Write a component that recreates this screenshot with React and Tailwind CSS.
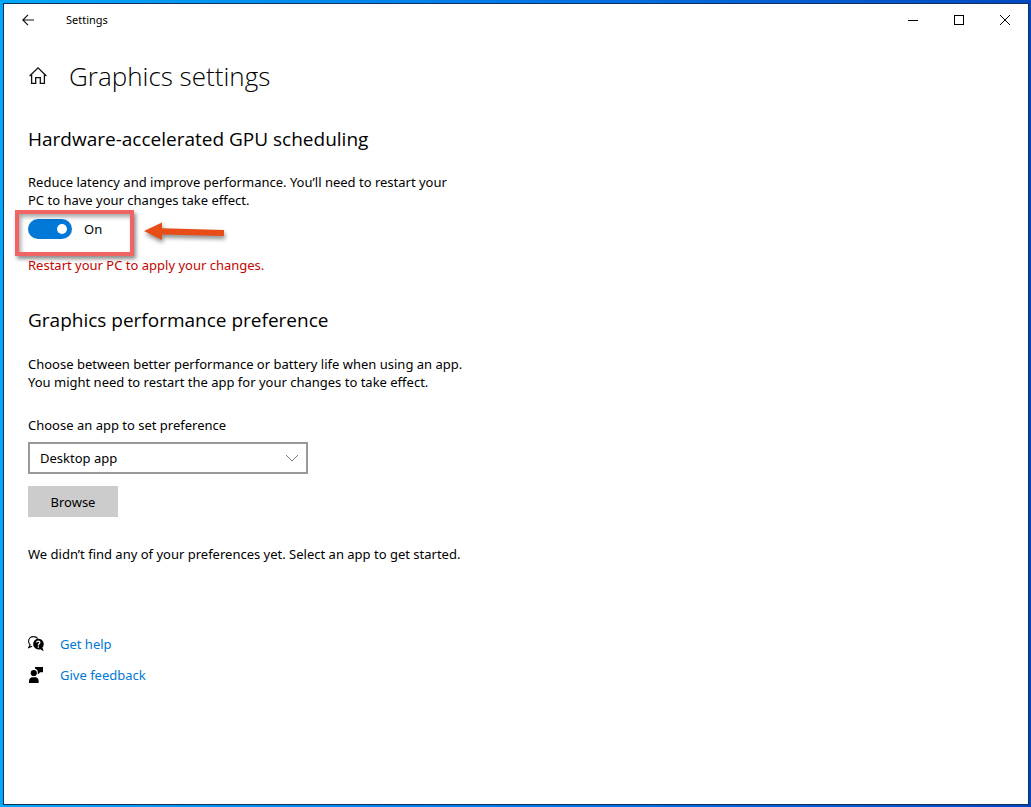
const BackIcon = () => (
    <svg width="12" height="12" viewBox="0 0 12 12" fill="none" stroke="#111" strokeWidth="1.2">
        <path d="M12 6H0.8M6 0.8L0.8 6L6 11.2" />
    </svg>
);

const HomeIcon = () => (
    <svg width="18" height="18" viewBox="0 0 18 18" fill="none" stroke="#111" strokeWidth="1.3">
        <path d="M0.6 9L9 0.9L17.4 9" />
        <path d="M2.6 7.4V16.4H6.7V10.6H11.3V16.4H15.4V7.4" />
    </svg>
);

const HelpIcon = () => (
    <svg width="16" height="16" viewBox="0 0 16 16">
        <path
            d="M5.4 0.6C2.8 0.6 0.6 2.6 0.6 5.2C0.6 6.8 1.3 8 2.1 8.8L0.7 11.6L4.2 10.2"
            fill="none"
            stroke="#000"
            strokeWidth="1.1"
        />
        <path d="M5.4 0.6C7.6 0.6 9 1.5 9.8 2.7" fill="none" stroke="#000" strokeWidth="1.1" />
        <path d="M10.2 2.7A5.4 5.4 0 1 0 12.3 13.2L15.7 15.2L14.4 11.6A5.4 5.4 0 0 0 10.2 2.7Z" />
        <path d="M8.6 6.5C8.7 4.6 12 4.6 11.9 6.6C11.8 7.8 10.3 7.9 10.3 9.4" fill="none" stroke="#fff" strokeWidth="1.2" />
        <rect x="9.7" y="10.4" width="1.3" height="1.3" fill="#fff" />
    </svg>
);

const FeedbackIcon = () => (
    <svg width="16" height="16" viewBox="0 0 16 16">
        <circle cx="5.8" cy="6" r="3.1" />
        <path d="M1 16V14.2C1 11.8 2.6 10.2 4.8 10.2H7.2C9.2 10.2 10.6 11.8 10.6 14.2V16Z" />
        <path d="M7 0H15V5.2H12.2L9.8 7.6V5.2C9.8 3.2 8.6 2.2 7 1.8Z" />
    </svg>
);

const TitleBar = () => (
    <header className="flex h-8 items-center">
        <button type="button" aria-label="Back" className="flex h-8 w-12 items-center justify-center">
            <BackIcon />
        </button>
        <span className="ml-[14px] text-[11px]">Settings</span>
        <div className="ml-auto flex">
            <button type="button" aria-label="Minimize" className="flex h-8 w-[46px] items-center justify-center">
                <svg width="10" height="10" viewBox="0 0 10 10">
                    <path d="M0 5.5H10" stroke="#000" />
                </svg>
            </button>
            <button type="button" aria-label="Maximize" className="flex h-8 w-[46px] items-center justify-center">
                <svg width="10" height="10" viewBox="0 0 10 10">
                    <rect x="0.5" y="0.5" width="9" height="9" fill="none" stroke="#000" />
                </svg>
            </button>
            <button type="button" aria-label="Close" className="flex h-8 w-[46px] items-center justify-center">
                <svg width="10" height="10" viewBox="0 0 10 10">
                    <path d="M0 0L10 10M10 0L0 10" stroke="#000" />
                </svg>
            </button>
        </div>
    </header>
);

const Highlight = () => (
    <>
        <div className="pointer-events-none absolute -top-[9px] -left-[13px] h-[46px] w-[119px] border-4 border-[#f16464] shadow-[2px_3px_4px_rgba(0,0,0,0.45),inset_2px_3px_4px_rgba(0,0,0,0.35)]" />
        <svg
            className="pointer-events-none absolute top-0 left-[114px] drop-shadow-[1px_3px_2px_rgba(0,0,0,0.45)]"
            width="84"
            height="26"
            viewBox="0 0 84 26"
        >
            <path d="M2 12L20 3.5V9.2L82 11V17L20 15.4V21Z" fill="#e84c17" />
        </svg>
    </>
);

const SectionTitle = ({ children }) => (
    <h2 className="font-['Open_Sans',sans-serif] text-[19px] leading-7">{children}</h2>
);

const FooterLink = ({ icon, text }) => (
    <div className="flex items-center gap-4">
        {icon}
        <a href="#" className="text-[#0078d7]">
            {text}
        </a>
    </div>
);

const App = () => {
    return (
        <div className="flex min-h-screen bg-linear-to-r from-[#00a8fa] via-[#0078e8] to-[#0048c0] pt-[3px] pr-[2px] pb-[2px] pl-[3px]">
            <div className="flex-1 border border-[#12305a] bg-white font-['Noto_Sans',sans-serif] text-[13px] leading-[18px] text-black">
                <TitleBar />

                <main className="px-6 pt-5 pb-10">
                    <div className="flex items-center gap-[22px] pl-px">
                        <a href="#" aria-label="Home">
                            <HomeIcon />
                        </a>
                        <h1 className="font-['Open_Sans',sans-serif] text-[26px] leading-10 font-light">
                            Graphics settings
                        </h1>
                    </div>

                    <section className="mt-[29px]">
                        <SectionTitle>Hardware-accelerated GPU scheduling</SectionTitle>
                        <p className="mt-5">
                            Reduce latency and improve performance. You’ll need to restart your
                            <br />
                            PC to have your changes take effect.
                        </p>

                        <div className="relative mt-[10px] h-5">
                            <label className="flex items-center gap-3">
                                <input type="checkbox" defaultChecked className="peer sr-only" />
                                <span className="flex h-5 w-11 items-center justify-end rounded-full bg-[#0078d7] px-[5px]">
                                    <span className="size-[10px] rounded-full bg-white" />
                                </span>
                                On
                            </label>
                            <Highlight />
                        </div>

                        <p className="mt-[17px] text-[#c50500]">Restart your PC to apply your changes.</p>
                    </section>

                    <section className="mt-8">
                        <SectionTitle>Graphics performance preference</SectionTitle>
                        <p className="mt-[21px]">
                            Choose between better performance or battery life when using an app.
                            <br />
                            You might need to restart the app for your changes to take effect.
                        </p>

                        <label htmlFor="app-kind" className="mt-[25px] block">
                            Choose an app to set preference
                        </label>
                        <div className="relative mt-2 w-[280px]">
                            <select
                                id="app-kind"
                                className="block h-8 w-full appearance-none border-2 border-[#999] bg-white px-[10px]"
                            >
                                <option>Desktop app</option>
                                <option>Microsoft Store app</option>
                            </select>
                            <svg
                                className="pointer-events-none absolute top-3 right-[9px]"
                                width="14"
                                height="8"
                                viewBox="0 0 14 8"
                                fill="none"
                                stroke="#777"
                            >
                                <path d="M1 1L7 7L13 1" />
                            </svg>
                        </div>
                        <button type="button" className="mt-3 block h-[31px] w-[90px] bg-[#ccc]">
                            Browse
                        </button>

                        <p className="mt-7">We didn’t find any of your preferences yet. Select an app to get started.</p>
                    </section>

                    <footer className="mt-[72px] flex flex-col gap-[13px]">
                        <FooterLink icon={<HelpIcon />} text="Get help" />
                        <FooterLink icon={<FeedbackIcon />} text="Give feedback" />
                    </footer>
                </main>
            </div>
        </div>
    );
};

export default App;
